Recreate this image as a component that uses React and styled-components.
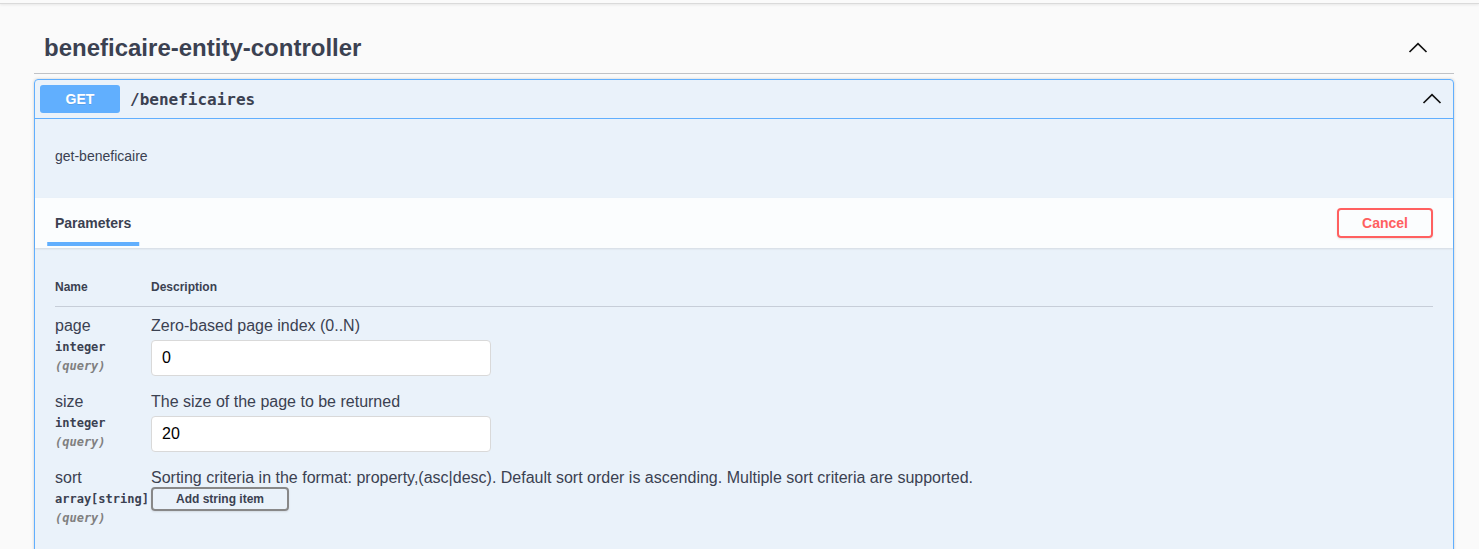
import React from "react";
import styled, { createGlobalStyle } from "styled-components";

const Global = createGlobalStyle`
  html, body { margin: 0; padding: 0; background: #fafafa; }
  body { font-family: "Liberation Sans", Arial, sans-serif; color: #3b4151; }
  * { box-sizing: border-box; }
`;

const TopEdge = styled.div`
  height: 4px;
  background: #fafafa;
  border-bottom: 1px solid #dadada;
  box-shadow: 0 1px 3px rgba(0, 0, 0, 0.08);
`;

const Wrapper = styled.div`
  padding: 22px 25px 0 34px;
`;

const TagRow = styled.div`
  display: flex;
  align-items: center;
  justify-content: space-between;
  padding: 8px 26px 12px 10px;
  border-bottom: 1px solid rgba(59, 65, 81, 0.3);
  margin-bottom: 5px;
`;

const TagTitle = styled.h3`
  margin: 0;
  font-size: 24px;
  line-height: 27px;
  font-weight: 700;
  color: #3b4151;
`;

const Chevron = styled.svg`
  width: 20px;
  height: 20px;
  display: block;
  flex: none;
`;

const Arrow = () => (
  <Chevron viewBox="0 0 20 20">
    <path d="M1.5 14 L10 5.6 L18.5 14" fill="none" stroke="#111" strokeWidth="1.7" />
  </Chevron>
);

const Opblock = styled.div`
  border: 1px solid #61affe;
  border-radius: 4px;
  background: rgba(97, 175, 254, 0.1);
  box-shadow: 0 0 3px rgba(0, 0, 0, 0.19);
`;

const Summary = styled.div`
  display: flex;
  align-items: center;
  padding: 5px 11px 5px 5px;
  border-bottom: 1px solid #61affe;
`;

const Method = styled.span`
  min-width: 80px;
  padding: 6px 0;
  border-radius: 3px;
  background: #61affe;
  color: #fff;
  font-size: 14px;
  line-height: 16px;
  font-weight: 700;
  text-align: center;
  text-shadow: 0 1px 0 rgba(0, 0, 0, 0.1);
`;

const Path = styled.span`
  flex: 1;
  padding: 0 10px;
  font-family: "DejaVu Sans Mono", monospace;
  font-size: 16px;
  font-weight: 700;
  color: #3b4151;
`;

const Description = styled.div`
  padding: 15px 20px;
  margin-bottom: 5px;
  p {
    margin: 14px 0;
    font-size: 14px;
    line-height: 16px;
  }
`;

const SectionHeader = styled.div`
  display: flex;
  align-items: center;
  justify-content: space-between;
  min-height: 50px;
  padding: 8px 20px;
  background: rgba(255, 255, 255, 0.8);
  box-shadow: 0 1px 2px rgba(0, 0, 0, 0.1);
`;

const TabTitle = styled.h4`
  margin: 0;
  font-size: 14px;
  line-height: 16px;
  font-weight: 700;
  color: #3b4151;
  span {
    position: relative;
    display: inline-block;
  }
  span::after {
    content: "";
    position: absolute;
    left: 50%;
    bottom: -15px;
    width: 120%;
    height: 4px;
    transform: translateX(-50%);
    background: #61affe;
  }
`;

const Button = styled.button`
  font-family: "Liberation Sans", Arial, sans-serif;
  font-weight: 700;
  font-size: ${(p) => (p.$small ? "12px" : "14px")};
  line-height: ${(p) => (p.$small ? "14px" : "16px")};
  padding: ${(p) => (p.$small ? "3px 23px" : "5px 23px")};
  border: 2px solid ${(p) => p.$color};
  color: ${(p) => (p.$small ? "#3b4151" : p.$color)};
  background: transparent;
  border-radius: 4px;
  box-shadow: 0 1px 2px rgba(0, 0, 0, 0.1);
  cursor: pointer;
`;

const TableWrap = styled.div`
  padding: 20px 20px 40px;
`;

const Grid = styled.div`
  display: grid;
  grid-template-columns: 96px 1fr;
`;

const Th = styled.div`
  padding: 12px 0;
  font-size: 12px;
  line-height: 14px;
  font-weight: 700;
  border-bottom: 1px solid rgba(59, 65, 81, 0.2);
`;

const NameCell = styled.div`
  padding-top: 10px;
`;

const DescCell = styled.div`
  padding: 10px 0 2px;
  display: flex;
  flex-direction: column;
  align-items: flex-start;
`;

const ParamName = styled.div`
  font-size: 16px;
  line-height: 18px;
`;

const ParamType = styled.div`
  font-family: "DejaVu Sans Mono", monospace;
  font-size: 12px;
  line-height: 14px;
  font-weight: 700;
  padding: 5px 0;
`;

const ParamIn = styled.div`
  font-family: "DejaVu Sans Mono", monospace;
  font-size: 12px;
  line-height: 14px;
  font-style: italic;
  font-weight: 700;
  color: #808080;
`;

const DescText = styled.div`
  font-size: 16px;
  line-height: 18px;
`;

const Input = styled.input`
  width: 340px;
  margin: 5px 0;
  padding: 8px 10px;
  border: 1px solid #d9d9d9;
  border-radius: 4px;
  background: #fff;
  font-family: "Liberation Sans", Arial, sans-serif;
  font-size: 16px;
  line-height: 18px;
  color: #000;
  outline: none;
`;

const params = [
  { name: "page", type: "integer", desc: "Zero-based page index (0..N)", value: "0" },
  { name: "size", type: "integer", desc: "The size of the page to be returned", value: "20" },
  {
    name: "sort",
    type: "array[string]",
    desc: "Sorting criteria in the format: property,(asc|desc). Default sort order is ascending. Multiple sort criteria are supported.",
    array: true,
  },
];

export default function App() {
  return (
    <>
      <Global />
      <TopEdge />
      <Wrapper>
        <TagRow>
          <TagTitle>beneficaire-entity-controller</TagTitle>
          <Arrow />
        </TagRow>
        <Opblock>
          <Summary>
            <Method>GET</Method>
            <Path>/beneficaires</Path>
            <Arrow />
          </Summary>
          <Description>
            <p>get-beneficaire</p>
          </Description>
          <SectionHeader>
            <TabTitle>
              <span>Parameters</span>
            </TabTitle>
            <Button $color="#ff6060">Cancel</Button>
          </SectionHeader>
          <TableWrap>
            <Grid>
              <Th>Name</Th>
              <Th>Description</Th>
              {params.map((p) => (
                <React.Fragment key={p.name}>
                  <NameCell>
                    <ParamName>{p.name}</ParamName>
                    <ParamType>{p.type}</ParamType>
                    <ParamIn>(query)</ParamIn>
                  </NameCell>
                  <DescCell>
                    <DescText>{p.desc}</DescText>
                    {p.array ? (
                      <Button $small $color="#888">
                        Add string item
                      </Button>
                    ) : (
                      <Input defaultValue={p.value} />
                    )}
                  </DescCell>
                </React.Fragment>
              ))}
            </Grid>
          </TableWrap>
        </Opblock>
      </Wrapper>
    </>
  );
}
